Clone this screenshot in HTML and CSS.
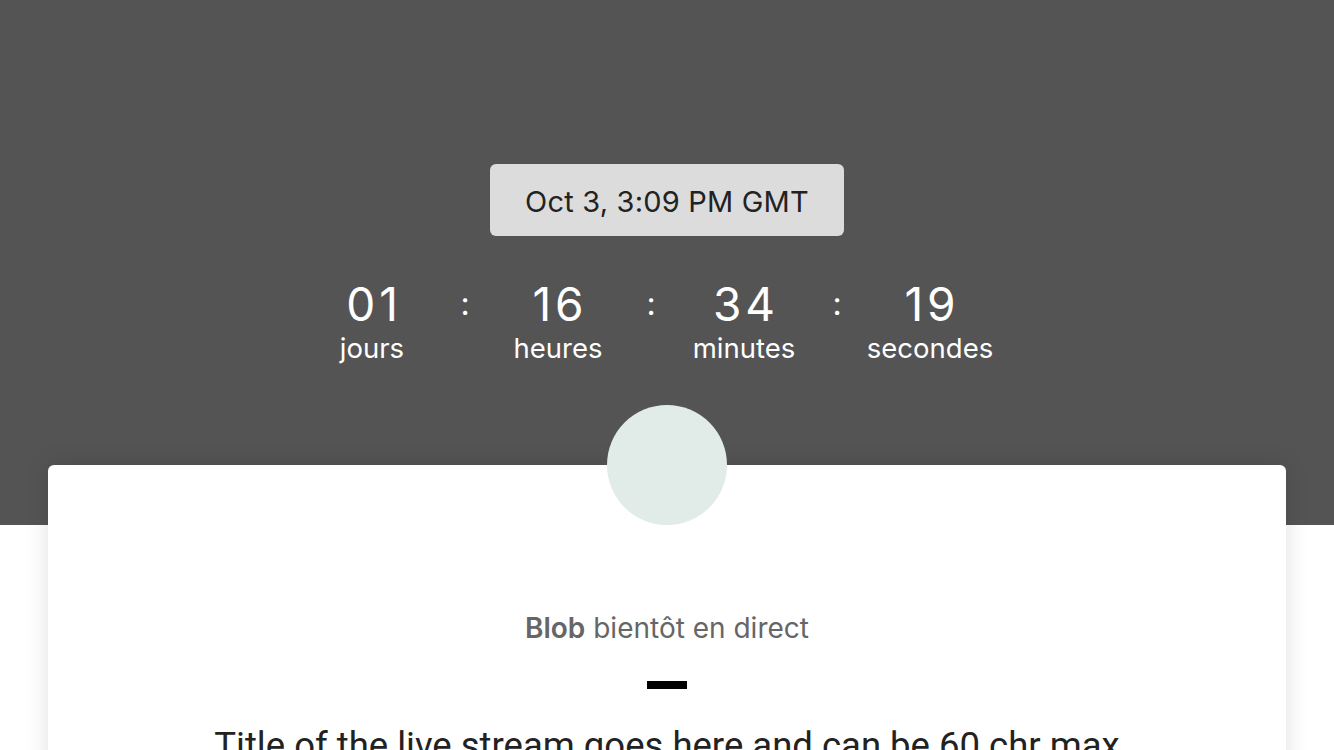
FILE: index.html
```html
<!DOCTYPE html>
<html lang="fr">
<head>
<meta charset="utf-8">
<title>Live</title>
<link rel="stylesheet" href="styles.css">
</head>
<body>
<section class="hero">
  <div class="date-pill">Oct 3, 3:09 PM GMT</div>
  <div class="countdown">
    <div class="unit"><span class="num">01</span><span class="lbl">jours</span></div>
    <span class="colon">:</span>
    <div class="unit"><span class="num">16</span><span class="lbl">heures</span></div>
    <span class="colon">:</span>
    <div class="unit"><span class="num">34</span><span class="lbl">minutes</span></div>
    <span class="colon">:</span>
    <div class="unit"><span class="num">19</span><span class="lbl">secondes</span></div>
  </div>
</section>
<main class="card">
  <div class="avatar"></div>
  <p class="host"><strong>Blob</strong> bientôt en direct</p>
  <div class="dash"></div>
  <h1 class="title">Title of the live stream goes here and can be 60 chr max</h1>
</main>
</body>
</html>
```
FILE: styles.css
```css
html, body {
  margin: 0;
  padding: 0;
  background: #ffffff;
  overflow: hidden;
}
body {
  font-family: Inter, "Noto Sans", sans-serif;
  width: 1334px;
  height: 750px;
}
.hero {
  background: #545454;
  height: 525px;
  display: flex;
  flex-direction: column;
  align-items: center;
  padding-top: 164px;
  box-sizing: border-box;
}
.date-pill {
  width: 354px;
  height: 72px;
  box-sizing: border-box;
  padding-top: 3px;
  background: #dcdcdc;
  border-radius: 6px;
  display: flex;
  align-items: center;
  justify-content: center;
  font-size: 29px;
  letter-spacing: 0.2px;
  color: #222;
}
.countdown {
  display: flex;
  align-items: flex-start;
  margin-top: 40px;
  margin-right: 32px;
  color: #fff;
}
.unit {
  width: 140px;
  display: flex;
  flex-direction: column;
  align-items: center;
}
.num {
  font-size: 46px;
  line-height: 56px;
  font-weight: 400;
  letter-spacing: 4px;
  margin-right: -4px;
}
.lbl {
  font-size: 27.5px;
  line-height: 32px;
  margin-top: 0;
}
.colon {
  width: 46px;
  text-align: center;
  font-size: 32px;
  line-height: 56px;
}
.card {
  position: relative;
  margin: -60px 48px 0;
  background: #fff;
  border-radius: 6px;
  box-shadow: 0 0 24px rgba(0,0,0,0.12);
  display: flex;
  flex-direction: column;
  align-items: center;
  height: 400px;
}
.avatar {
  width: 120px;
  height: 120px;
  border-radius: 50%;
  background: #e1ebe8;
  margin-top: -60px;
}
.host {
  margin: 87px 0 0;
  font-size: 28px;
  line-height: 32px;
  color: #666;
}
.host strong {
  font-weight: 600;
}
.dash {
  width: 40px;
  height: 8px;
  background: #000;
  margin-top: 37px;
}
.title {
  margin: 35px 0 0;
  font-family: Roboto, sans-serif;
  font-weight: 400;
  font-size: 36.5px;
  line-height: 44px;
  color: #222;
  white-space: nowrap;
}
```
